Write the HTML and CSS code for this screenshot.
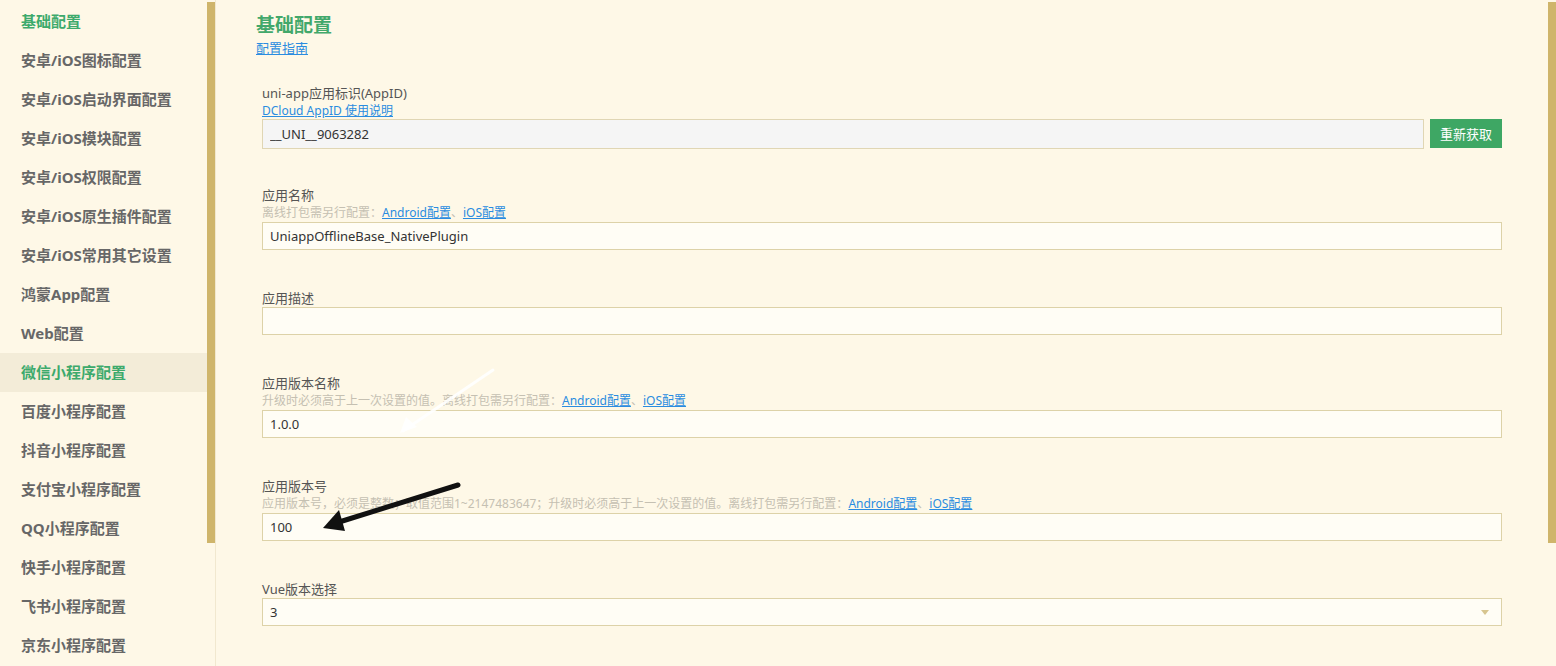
FILE: index.html
```html
<!DOCTYPE html>
<html lang="zh-CN">
<head>
  <meta charset="UTF-8" />
  <meta name="viewport" content="width=device-width, initial-scale=1.0"/>
  <title>manifest.json</title>
  <link rel="stylesheet" href="styles.css">
</head>
<body>

  <div class="sidebar">
    <ul class="menu">
      <li class="menu-item current">基础配置</li>
      <li class="menu-item">安卓/iOS图标配置</li>
      <li class="menu-item">安卓/iOS启动界面配置</li>
      <li class="menu-item">安卓/iOS模块配置</li>
      <li class="menu-item">安卓/iOS权限配置</li>
      <li class="menu-item">安卓/iOS原生插件配置</li>
      <li class="menu-item">安卓/iOS常用其它设置</li>
      <li class="menu-item">鸿蒙App配置</li>
      <li class="menu-item">Web配置</li>
      <li class="menu-item current hover">微信小程序配置</li>
      <li class="menu-item">百度小程序配置</li>
      <li class="menu-item">抖音小程序配置</li>
      <li class="menu-item">支付宝小程序配置</li>
      <li class="menu-item">QQ小程序配置</li>
      <li class="menu-item">快手小程序配置</li>
      <li class="menu-item">飞书小程序配置</li>
      <li class="menu-item">京东小程序配置</li>
    </ul>
    <div class="rail"><div class="thumb"></div></div>
  </div>

  <div class="main">
    <div class="content">
      <h2 class="title">基础配置</h2>
      <a class="guide" href="#">配置指南</a>

      <div class="fields">
        <div class="field first">
          <div class="label">uni-app应用标识(AppID)</div>
          <a class="doc-link" href="#">DCloud AppID 使用说明</a>
          <div class="row">
            <input class="input" type="text" value="__UNI__9063282" disabled />
            <button class="btn">重新获取</button>
          </div>
        </div>

        <div class="field">
          <div class="label">应用名称</div>
          <div class="hint">离线打包需另行配置：<a href="#">Android配置</a>、<a href="#">iOS配置</a></div>
          <input class="input" type="text" value="UniappOfflineBase_NativePlugin" />
        </div>

        <div class="field">
          <div class="label">应用描述</div>
          <input class="input" type="text" value="" />
        </div>

        <div class="field">
          <div class="label">应用版本名称</div>
          <div class="hint">升级时必须高于上一次设置的值。离线打包需另行配置：<a href="#">Android配置</a>、<a href="#">iOS配置</a></div>
          <input class="input" type="text" value="1.0.0" />
        </div>

        <div class="field">
          <div class="label">应用版本号</div>
          <div class="hint">应用版本号，必须是整数；取值范围1~2147483647；升级时必须高于上一次设置的值。离线打包需另行配置：<a href="#">Android配置</a>、<a href="#">iOS配置</a></div>
          <input class="input" type="text" value="100" />
        </div>

        <div class="field">
          <div class="label">Vue版本选择</div>
          <div class="select">
            <span>3</span>
            <i class="caret"></i>
          </div>
        </div>
      </div>
    </div>
    <div class="rail"><div class="thumb"></div></div>
  </div>

  <!-- marker arrows drawn on top of the form -->
  <svg class="marks" width="1556" height="666" viewBox="0 0 1556 666">
    <g stroke="#ffffff" stroke-width="3" stroke-linecap="round" fill="none" opacity="0.9">
      <line x1="493" y1="370" x2="403" y2="431" />
    </g>
    <polygon points="400,433 406,417 417,427" fill="#ffffff" opacity="0.85" />
    <g stroke="#111111" stroke-width="5" stroke-linecap="round" fill="none">
      <line x1="458" y1="485" x2="336" y2="523" />
    </g>
    <polygon points="323,528 339,510 345,531" fill="#111111" />
  </svg>

</body>
</html>
```

FILE: styles.css
```css
body {
  margin: 0;
  height: 100vh;
  overflow: hidden;
  display: flex;
  background: #fef8e7;
  font-family: "Noto Sans", "Noto Sans CJK SC", sans-serif;
  color: #555;
}

/* left navigation */
.sidebar {
  width: 216px;
  flex-shrink: 0;
  display: flex;
  border-right: 1px solid #f1e8cf;
  box-sizing: border-box;
  overflow: hidden;
}

.menu {
  list-style: none;
  margin: 0;
  padding: 2px 0 0 0;
  width: 207px;
}

.menu-item {
  height: 39px;
  line-height: 39px;
  padding-left: 21px;
  font-size: 15px;
  font-weight: bold;
  color: #676767;
  white-space: nowrap;
}

.menu-item.current {
  color: #3daa6c;
}

.menu-item.hover {
  background: #f3ecd8;
}

.rail {
  width: 8px;
  flex-shrink: 0;
  padding-top: 2px;
}

.thumb {
  height: 541px;
  background: #cfb56b;
}

/* form area */
.main {
  flex: 1;
  display: flex;
  overflow: hidden;
}

.content {
  flex: 1;
  padding: 12px 46px 0 40px;
}

.title {
  margin: 0;
  font-size: 19px;
  line-height: 27px;
  color: #42a86b;
  font-weight: bold;
}

.guide {
  display: block;
  font-size: 13px;
  line-height: 18px;
  color: #2a8ce0;
}

a {
  color: #2a8ce0;
}

.fields {
  margin-top: 27px;
}

.field {
  padding-left: 6px;
  margin-bottom: 39px;
}

.field.first {
  margin-bottom: 37px;
}

.label {
  font-size: 13px;
  line-height: 18px;
  color: #555;
}

.doc-link {
  display: block;
  font-size: 12px;
  line-height: 17px;
}

.hint {
  font-size: 12px;
  line-height: 18px;
  color: #c5c0b2;
  white-space: nowrap;
}

.row {
  display: flex;
  gap: 6px;
}

.input {
  display: block;
  width: 100%;
  height: 28px;
  box-sizing: border-box;
  border: 1px solid #ddd2a8;
  background: #fffdf5;
  padding: 0 7px;
  font-family: inherit;
  font-size: 13px;
  color: #333;
  outline: none;
}

.row .input {
  flex: 1;
  height: 30px;
  background: #f5f5f5;
  border-color: #e0d6b4;
}

.btn {
  width: 72px;
  height: 29px;
  border: none;
  background: #3ea764;
  color: #fff;
  font-family: inherit;
  font-size: 13px;
  padding: 0;
}

.select {
  height: 28px;
  box-sizing: border-box;
  border: 1px solid #ddd2a8;
  background: #fffdf5;
  padding: 0 7px;
  font-size: 13px;
  line-height: 26px;
  color: #333;
  display: flex;
  justify-content: space-between;
  align-items: center;
}

.caret {
  width: 0;
  height: 0;
  border-left: 4px solid transparent;
  border-right: 4px solid transparent;
  border-top: 5px solid #d7c58f;
  margin-right: 5px;
}

.marks {
  position: absolute;
  left: 0;
  top: 0;
  pointer-events: none;
}
```
